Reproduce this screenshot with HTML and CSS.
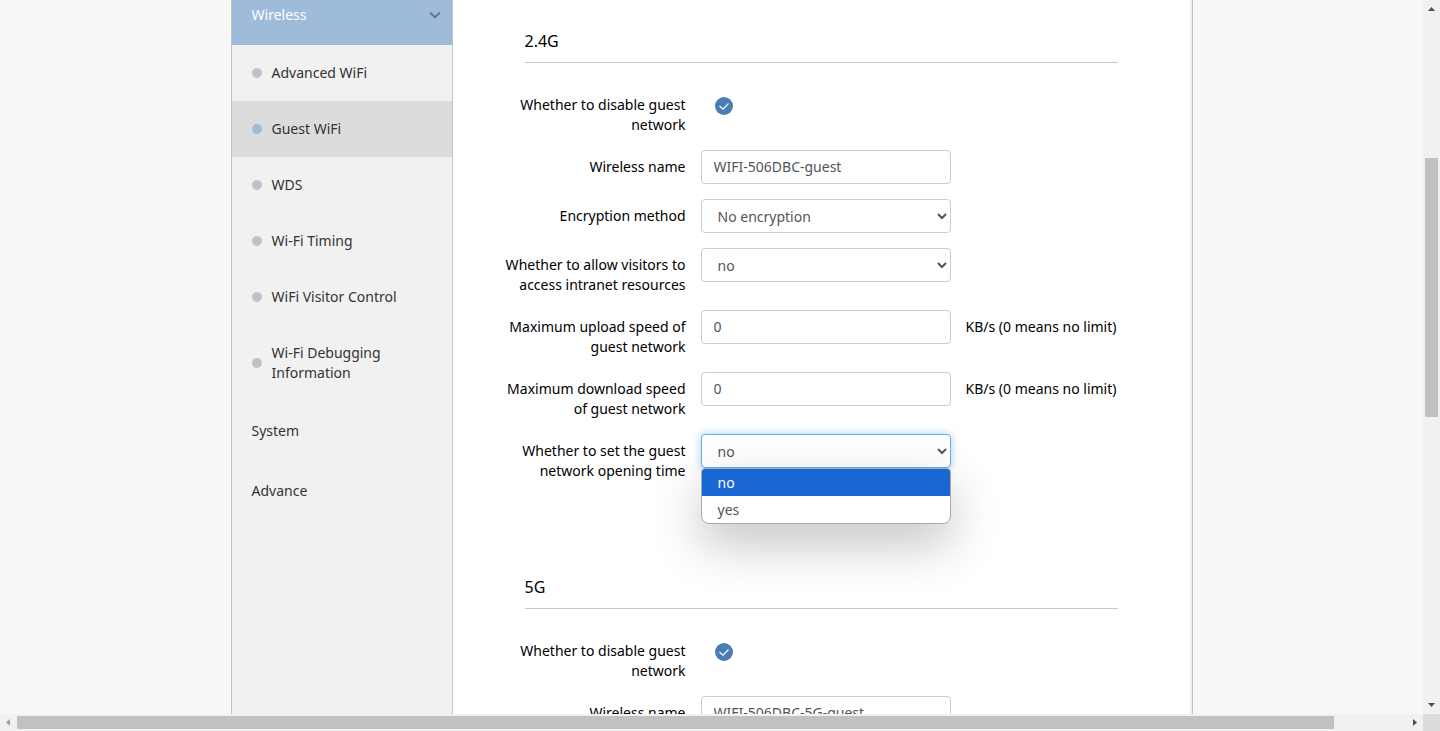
FILE: index.html
```html
<!DOCTYPE html>
<html lang="en">
<head>
<meta charset="utf-8">
<title>Guest WiFi</title>
<link rel="stylesheet" href="styles.css">
</head>
<body>
<div class="window">
  <div class="view">
    <div class="page">
      <nav class="sidebar" aria-label="Settings">
        <a class="group group-open" href="#wireless">Wireless
          <svg class="chevron" viewBox="0 0 14 8" aria-hidden="true"><path d="M2 1.5L7 6.3L12 1.5"/></svg>
        </a>
        <a class="item" href="#advanced"><span class="dot"></span>Advanced WiFi</a>
        <a class="item item-active" href="#guest"><span class="dot"></span>Guest WiFi</a>
        <a class="item" href="#wds"><span class="dot"></span>WDS</a>
        <a class="item" href="#timing"><span class="dot"></span>Wi-Fi Timing</a>
        <a class="item" href="#visitor"><span class="dot"></span>WiFi Visitor Control</a>
        <a class="item" href="#debug"><span class="dot"></span>Wi-Fi Debugging Information</a>
        <a class="group" href="#system">System</a>
        <a class="group" href="#advance">Advance</a>
      </nav>
      <main class="content">
        <section class="band">
          <h2 class="title">2.4G</h2>
          <div class="row">
            <label class="label" for="off24">Whether to disable guest network</label>
            <div class="check">
              <input class="check-box" type="checkbox" id="off24" checked>
              <svg class="check-mark" viewBox="0 0 18 18" aria-hidden="true"><path d="M4.5 9L8 12.2L13.5 6.5"/></svg>
            </div>
          </div>
          <div class="row">
            <label class="label" for="name24">Wireless name</label>
            <input class="field text-field" type="text" id="name24" value="WIFI-506DBC-guest">
          </div>
          <div class="row">
            <label class="label" for="enc24">Encryption method</label>
            <select class="field" id="enc24"><option>No encryption</option></select>
          </div>
          <div class="row">
            <label class="label" for="lan24">Whether to allow visitors to access intranet resources</label>
            <select class="field" id="lan24"><option>no</option><option>yes</option></select>
          </div>
          <div class="row">
            <label class="label" for="up24">Maximum upload speed of guest network</label>
            <input class="field text-field" type="text" id="up24" value="0">
            <span class="note">KB/s (0 means no limit)</span>
          </div>
          <div class="row">
            <label class="label" for="down24">Maximum download speed of guest network</label>
            <input class="field text-field" type="text" id="down24" value="0">
            <span class="note">KB/s (0 means no limit)</span>
          </div>
          <div class="row">
            <label class="label" for="time24">Whether to set the guest network opening time</label>
            <div class="picker">
              <select class="field field-focus" id="time24"><option>no</option><option>yes</option></select>
              <ul class="menu" role="listbox" aria-label="Opening time">
                <li class="option option-active" role="option" aria-selected="true">no</li>
                <li class="option" role="option" aria-selected="false">yes</li>
              </ul>
            </div>
          </div>
        </section>
        <section class="band">
          <h2 class="title">5G</h2>
          <div class="row">
            <label class="label" for="off5">Whether to disable guest network</label>
            <div class="check">
              <input class="check-box" type="checkbox" id="off5" checked>
              <svg class="check-mark" viewBox="0 0 18 18" aria-hidden="true"><path d="M4.5 9L8 12.2L13.5 6.5"/></svg>
            </div>
          </div>
          <div class="row">
            <label class="label" for="name5">Wireless name</label>
            <input class="field text-field" type="text" id="name5" value="WIFI-506DBC-5G-guest">
          </div>
        </section>
      </main>
    </div>
  </div>
  <div class="bar bar-v" aria-hidden="true">
    <svg class="arrow" viewBox="0 0 17 17"><path d="M5 11L8.5 7L12 11Z"/></svg>
    <div class="track"><div class="thumb"></div></div>
    <svg class="arrow" viewBox="0 0 17 17"><path d="M5 6L8.5 10L12 6Z"/></svg>
  </div>
  <div class="bar bar-h" aria-hidden="true">
    <svg class="arrow arrow-off" viewBox="0 0 17 17"><path d="M10 5L6 8.5L10 12Z"/></svg>
    <div class="track"><div class="thumb"></div></div>
    <svg class="arrow" viewBox="0 0 17 17"><path d="M7 5L11 8.5L7 12Z"/></svg>
  </div>
  <div class="corner"></div>
</div>
</body>
</html>
```
FILE: styles.css
```css
* { box-sizing: border-box; }

body {
  margin: 0;
  font-family: "Noto Sans", "Open Sans", sans-serif;
  font-size: 14px;
  line-height: 20px;
  color: #000;
  background: #f7f7f7;
}

.window {
  display: grid;
  grid-template-columns: 1fr 17px;
  grid-template-rows: 1fr 17px;
  height: 100vh;
}

.view { overflow: hidden; }

.page {
  display: flex;
  max-width: 962px;
  min-height: 100%;
  margin: 0 auto;
  border-left: 1px solid #c4c4c4;
  border-right: 1px solid #c4c4c4;
}

/* Sidebar */
.sidebar {
  flex: 0 0 221px;
  background: #f1f1f1;
  border-right: 1px solid #c4c4c4;
}

.group {
  display: flex;
  align-items: center;
  justify-content: space-between;
  padding: 20px;
  color: #333;
  text-decoration: none;
}

.group-open {
  padding: 5px 10px 20px 20px;
  background: #9fbbda;
  color: #fff;
}

.chevron {
  width: 14px;
  height: 8px;
  fill: none;
  stroke: #6b7785;
  stroke-width: 2;
}

.item {
  display: flex;
  align-items: center;
  gap: 10px;
  padding: 18px 40px 18px 20px;
  color: #333;
  text-decoration: none;
}

.item-active { background: #dcdcdc; }

.dot {
  flex: none;
  width: 10px;
  height: 10px;
  border-radius: 50%;
  background: #bfc1c8;
}

.item-active .dot { background: #9fbbda; }

/* Form */
.content {
  flex: 1;
  padding-left: 43px;
  background: #fff;
  border-right: 2px solid #f1f1f1;
}

.band { padding: 31px 0 50px; }

.title {
  margin: 0 72px 25px 29px;
  padding-bottom: 11px;
  border-bottom: 1px solid #c8c8c8;
  font-size: 16px;
  font-weight: 400;
}

.row {
  display: grid;
  grid-template-columns: 190px 250px 1fr;
  align-items: start;
  column-gap: 15px;
  margin-bottom: 15px;
}

.label {
  padding-top: 7px;
  text-align: right;
}

.note { padding-top: 7px; }

.field {
  width: 100%;
  height: 34px;
  padding: 6px 12px;
  border: 1px solid #ccc;
  border-radius: 4px;
  outline: none;
  background: #fff;
  color: #555;
  font: inherit;
}

.text-field { padding: 5px 12px 7px; }

.field-focus {
  display: block;
  border-color: #66afe9;
  box-shadow: 0 0 8px rgba(102, 175, 233, 0.6);
}

.check {
  display: grid;
  padding: 9px 14px 8px;
}

.check-box,
.check-mark {
  grid-area: 1 / 1;
  width: 18px;
  height: 18px;
  margin: 0;
}

.check-box {
  appearance: none;
  border-radius: 50%;
  background: #4a7db6;
}

.check-mark {
  pointer-events: none;
  fill: none;
  stroke: #fff;
  stroke-width: 1.1;
}

.picker { position: relative; }

.menu {
  position: absolute;
  top: 100%;
  left: 0;
  right: 0;
  margin: 0;
  padding: 0;
  overflow: hidden;
  list-style: none;
  background: #fff;
  border: 1px solid #aaa;
  border-radius: 4px 4px 8px 8px;
  box-shadow: 0 20px 50px rgba(0, 0, 0, 0.24);
}

.option {
  padding: 4px 16px 3px;
  color: #555;
}

.option-active {
  background: #1967d2;
  color: #fff;
}

/* Scroll bars */
.bar {
  display: flex;
  background: #f1f1f1;
}

.bar-v { flex-direction: column; }

.arrow {
  flex: none;
  width: 17px;
  height: 17px;
  fill: #505050;
}

.arrow-off { fill: #a3a3a3; }

.track {
  flex: 1;
  display: flex;
}

.thumb { background: #c1c1c1; }

.bar-v .track {
  flex-direction: column;
  padding: 0 2px;
}

.bar-v .track::before {
  content: "";
  height: 20.7%;
}

.bar-v .thumb { height: 38.1%; }

.bar-h .track { padding: 2px 0; }

.bar-h .thumb { width: 94.8%; }

.corner { background: #dcdcdc; }
```
